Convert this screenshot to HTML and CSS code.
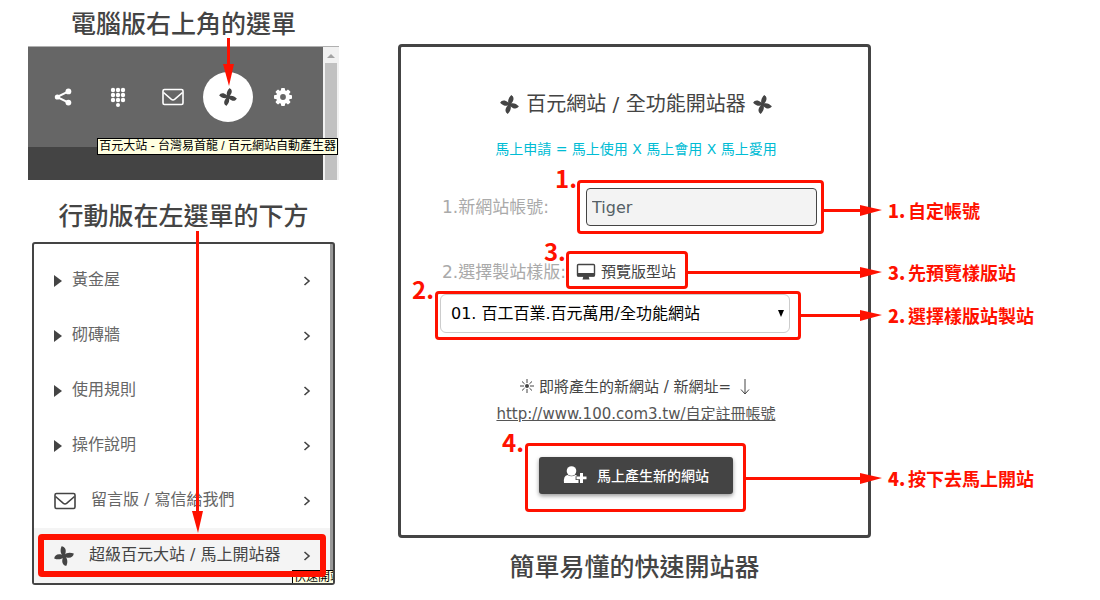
FILE: index.html
```html
<!DOCTYPE html>
<html lang="zh-Hant">
<head>
    <meta charset="utf-8">
    <title>快速開站器</title>
    <link rel="stylesheet" href="styles.css">
</head>
<body>

<!-- Shared icons -->
<svg class="icon-defs" aria-hidden="true">
    <symbol id="fan" viewBox="0 0 20 20">
        <g id="blades">
            <path id="blade" d="M11 11 L8.8 9.6 C6.4 7.6 6 3.6 7.6 0.2 C10.8 0.6 12.6 3.4 11.4 7.6 Z"/>
            <use href="#blade" transform="rotate(90 10 10)"/>
            <use href="#blade" transform="rotate(180 10 10)"/>
            <use href="#blade" transform="rotate(270 10 10)"/>
        </g>
    </symbol>
    <symbol id="mail" viewBox="0 0 22 18">
        <rect x="1" y="1.5" width="20" height="15" rx="1.5" fill="none" stroke="currentColor" stroke-width="1.6"/>
        <path d="M1.5 4.5 L9.4 11.4 Q11 12.6 12.6 11.4 L20.5 4.5" fill="none" stroke="currentColor" stroke-width="1.6"/>
    </symbol>
    <symbol id="chevron" viewBox="0 0 8 10">
        <path d="M1.5 1 L6 5 L1.5 9" fill="none" stroke="currentColor" stroke-width="1.6"/>
    </symbol>
</svg>

<main class="guide">

    <!-- Left: where to find the menu -->
    <section class="menus">
        <h2 class="caption">電腦版右上角的選單</h2>

        <div class="desktop">
            <div class="desktop-page">
                <nav class="toolbar">
                    <button class="tool" aria-label="分享">
                        <svg width="18" height="18" viewBox="0 0 18 18"><path d="M15 3.2 L3 9 L15 14.8" fill="none" stroke="currentColor" stroke-width="2"/><circle cx="14.4" cy="3.4" r="2.9"/><circle cx="3.4" cy="9" r="2.6"/><circle cx="14.4" cy="14.6" r="2.9"/></svg>
                    </button>
                    <button class="tool" aria-label="電話">
                        <svg width="16" height="20" viewBox="0 0 16 20"><g id="keys"><circle cx="3" cy="3" r="2.2"/><circle cx="8" cy="3" r="2.2"/><circle cx="13" cy="3" r="2.2"/></g><use href="#keys" y="5"/><use href="#keys" y="10"/><circle cx="8" cy="18" r="2"/></svg>
                    </button>
                    <button class="tool" aria-label="寫信">
                        <svg width="22" height="18"><use href="#mail"/></svg>
                    </button>
                    <button class="tool tool-active" aria-label="百元大站">
                        <svg class="fan-tilt" width="18" height="18"><use href="#fan"/></svg>
                        <span class="arrow-down"></span>
                    </button>
                    <button class="tool" aria-label="設定">
                        <svg width="18" height="18" viewBox="0 0 18 18"><circle cx="9" cy="9" r="4.9" fill="none" stroke="currentColor" stroke-width="4"/><g id="teeth"><rect x="7" y="0" width="4" height="4" rx="1"/><rect x="7" y="14" width="4" height="4" rx="1"/><rect x="0" y="7" width="4" height="4" rx="1"/><rect x="14" y="7" width="4" height="4" rx="1"/></g><use href="#teeth" transform="rotate(45 9 9)"/></svg>
                    </button>
                </nav>
            </div>
            <div class="scrollbar"></div>
            <span class="tooltip toolbar-tip">百元大站 - 台灣易首龍 / 百元網站自動產生器</span>
        </div>

        <h2 class="caption caption-mobile">行動版在左選單的下方</h2>

        <nav class="side-menu">
            <a class="item" href="#"><span class="caret"></span><span class="item-text">黃金屋</span><svg class="more" width="8" height="10"><use href="#chevron"/></svg></a>
            <a class="item" href="#"><span class="caret"></span><span class="item-text">砌磚牆</span><svg class="more" width="8" height="10"><use href="#chevron"/></svg></a>
            <a class="item" href="#"><span class="caret"></span><span class="item-text">使用規則</span><svg class="more" width="8" height="10"><use href="#chevron"/></svg></a>
            <a class="item" href="#"><span class="caret"></span><span class="item-text">操作說明</span><svg class="more" width="8" height="10"><use href="#chevron"/></svg></a>
            <a class="item item-mail" href="#"><svg width="22" height="18"><use href="#mail"/></svg><span class="item-text">留言版 / 寫信給我們</span><svg class="more" width="8" height="10"><use href="#chevron"/></svg></a>
            <a class="item item-current" href="#"><svg width="20" height="20"><use href="#fan"/></svg><span class="item-text">超級百元大站 / 馬上開站器</span><svg class="more" width="8" height="10"><use href="#chevron"/></svg>
                <span class="tooltip menu-tip">快速開站</span>
                <span class="frame frame-menu"></span>
            </a>
            <span class="arrow-down arrow-menu"></span>
        </nav>
    </section>

    <!-- Right: the site builder form -->
    <section class="builder">
        <form class="panel">
            <h1 class="title">
                <svg class="fan-tilt" width="19" height="19"><use href="#fan"/></svg>
                <span>百元網站 / 全功能開站器</span>
                <svg class="fan-tilt" width="19" height="19"><use href="#fan"/></svg>
            </h1>
            <p class="slogan">馬上申請 = 馬上使用 X 馬上會用 X 馬上愛用</p>

            <div class="row row-account">
                <label for="account">1.新網站帳號:</label>
                <div class="marked account">
                    <input type="text" id="account" name="account" value="Tiger">
                    <span class="frame frame-account"></span>
                    <b class="number number-account">1.</b>
                    <span class="callout callout-account"><i class="arrow"></i><b>1.</b>自定帳號</span>
                </div>
            </div>

            <div class="row row-template">
                <label for="template">2.選擇製站樣版:</label>
                <div class="marked preview">
                    <a class="preview-link" href="#"><svg width="20" height="18" viewBox="0 0 20 18"><rect x="1.5" y="1.5" width="17" height="11.5" rx="1" fill="none" stroke="currentColor" stroke-width="1.4"/><path d="M1 10 H19 V12.5 Q19 13.5 18 13.5 H2 Q1 13.5 1 12.5 Z M7.5 13 H12.5 L13.5 16.5 H6.5 Z"/></svg>預覽版型站</a>
                    <span class="frame frame-preview"></span>
                    <b class="number number-preview">3.</b>
                    <span class="callout callout-preview"><i class="arrow"></i><b>3.</b>先預覽樣版站</span>
                </div>
            </div>

            <div class="marked template">
                <select id="template" name="template">
                    <option>01. 百工百業.百元萬用/全功能網站</option>
                </select>
                <span class="frame frame-template"></span>
                <b class="number number-template">2.</b>
                <span class="callout callout-template"><i class="arrow"></i><b>2.</b>選擇樣版站製站</span>
            </div>

            <p class="result">
                <svg width="14" height="14" viewBox="0 0 14 14"><circle cx="7" cy="7" r="2"/><path d="M7 0 V4 M7 10 V14 M0 7 H4 M10 7 H14 M2 2.5 L4.6 4.9 M9.4 9.1 L12 11.5 M12 2.5 L9.4 4.9 M4.6 9.1 L2 11.5" stroke="currentColor" stroke-width="1"/></svg>
                即將產生的新網站 / 新網址= <svg class="down" width="16" height="16" viewBox="0 0 16 16"><path d="M9 0 V15 M5 10.5 L9 15 L13 10.5" fill="none" stroke="currentColor"/></svg><br>
                <a href="#">http://www.100.com3.tw/自定註冊帳號</a>
            </p>

            <div class="marked submit">
                <button type="button" class="submit-button">
                    <svg width="24" height="18" viewBox="0 0 24 18"><circle cx="8.5" cy="5" r="4.8"/><path d="M1 17 Q0.2 9.5 4.6 9 Q8.5 11.5 12.4 9 Q13.5 9.2 14 10 V10.2 H12.6 V14 H15.5 V17 Z"/><path d="M17 7 H20 V10.5 H23.5 V13.2 H20 V17 H17 V13.2 H13.5 V10.5 H17 Z"/></svg>
                    馬上產生新的網站
                </button>
                <span class="frame frame-submit"></span>
                <b class="number number-submit">4.</b>
                <span class="callout callout-submit"><i class="arrow"></i><b>4.</b>按下去馬上開站</span>
            </div>
        </form>

        <h2 class="caption caption-builder">簡單易懂的快速開站器</h2>
    </section>

</main>

</body>
</html>
```
FILE: styles.css
```css
* {
    box-sizing: border-box;
}

body {
    margin: 0;
    background-color: #fff;
    color: #444;
    font-family: "DejaVu Sans", "Noto Sans CJK TC", sans-serif;
    font-size: 16px;
}

h1, h2, p {
    margin: 0;
}

svg {
    fill: currentColor;
    flex: none;
}

.icon-defs {
    position: absolute;
    width: 0;
    height: 0;
}

/* right padding leaves room for the callouts */
.guide {
    display: grid;
    grid-template-columns: 311fr 473fr;
    column-gap: 59px;
    padding: 5px 229px 0 28px;
}

.caption {
    font-family: "Noto Sans CJK TC", sans-serif;
    font-size: 25px;
    font-weight: 500;
    line-height: 34px;
    text-align: center;
    white-space: nowrap;
}

.caption-mobile {
    margin: 17px 0 11px;
}

.caption-builder {
    margin-top: 10px;
}

/* Desktop toolbar */
.desktop {
    position: relative;
    display: flex;
    margin-top: 7px;
    border-top: 1px solid #b0b0b0;
}

.desktop-page {
    flex: 1;
    padding-bottom: 33px;
    background-color: #444;
}

.toolbar {
    display: flex;
    gap: 5px;
    padding: 25px 10px;
    background-color: #666;
}

.tool {
    position: relative;
    display: flex;
    align-items: center;
    justify-content: center;
    width: 50px;
    height: 50px;
    padding: 0;
    border: none;
    border-radius: 50%;
    background: none;
    color: #fff;
    cursor: pointer;
}

.tool-active {
    background-color: #fff;
    color: #444;
}

.fan-tilt {
    transform: rotate(25deg);
}

.scrollbar {
    position: relative;
    width: 16px;
    padding: 16px 2px 0;
    background-color: #f1f1f1;
}

.scrollbar::before {
    content: "";
    position: absolute;
    top: 7px;
    left: 4px;
    border: 4px solid transparent;
    border-top: none;
    border-bottom-color: #a3a3a3;
}

.scrollbar::after {
    content: "";
    display: block;
    height: 100%;
    background-color: #c1c1c1;
}

.tooltip {
    position: absolute;
    border: 1px solid #000;
    background-color: #ffffe1;
    color: #000;
    font-family: "Liberation Sans", "Noto Sans CJK TC", sans-serif;
    font-size: 12px;
    line-height: 15px;
    white-space: nowrap;
}

.toolbar-tip {
    top: 91px;
    right: 1px;
    padding: 0 1px;
}

/* Mobile side menu */
.side-menu {
    position: relative;
    margin: 0 4px;
    padding-top: 9px;
    border: 2px solid #444;
    border-radius: 3px;
    background: linear-gradient(#999, #999) right / 3px 100% no-repeat;
}

.item {
    position: relative;
    display: flex;
    align-items: center;
    height: 55px;
    margin-right: 3px;
    padding: 0 19px 0 20px;
    color: #666;
    line-height: 24px;
    text-decoration: none;
    white-space: nowrap;
}

.item svg {
    color: #444;
}

.item-text {
    flex: 1;
    margin-left: 10px;
    padding-bottom: 2px;
}

.item-mail .item-text,
.item-current .item-text {
    margin-left: 15px;
}

.item-current {
    background-color: #f4f4f4;
    color: #444;
}

.caret {
    border: 6px solid transparent;
    border-left: 8px solid #444;
    border-right: none;
}

.menu-tip {
    right: -3px;
    bottom: 0;
    width: 41px;
    height: 13px;
    border-width: 1px 0 0 1px;
    padding-left: 1px;
    line-height: 12px;
    overflow: hidden;
}

/* Red marks */
.frame {
    position: absolute;
    border: 3px solid #ff1100;
    border-radius: 4px;
    pointer-events: none;
}

.frame-menu {
    inset: 6px 4px 6px 4px;
    border-width: 6px;
}

.arrow-down {
    position: absolute;
    bottom: 36px;
    left: 50%;
    width: 3px;
    height: 48px;
    margin-left: -1px;
    background: linear-gradient(#ff1100, #ff1100) top / 3px calc(100% - 20px) no-repeat;
}

.arrow-down::after {
    content: "";
    position: absolute;
    bottom: 0;
    left: -4px;
    border: solid transparent;
    border-width: 22px 5px 0 6px;
    border-top-color: #ff1100;
}

.arrow-menu {
    top: -13px;
    bottom: 50px;
    left: 162px;
    height: auto;
    margin-left: 0;
}

.marked {
    position: relative;
}

.number,
.callout {
    position: absolute;
    color: #ff1100;
    font-family: "Noto Sans CJK TC", sans-serif;
    font-weight: 700;
    line-height: 24px;
    white-space: nowrap;
}

.number {
    font-size: 24px;
}

.callout {
    display: flex;
    align-items: center;
    left: 100%;
    font-size: 18px;
}

.callout b {
    width: 20px;
    margin-left: 6px;
}

.arrow {
    position: relative;
    height: 3px;
    background: linear-gradient(#ff1100, #ff1100) left / calc(100% - 20px) 3px no-repeat;
}

.arrow::after {
    content: "";
    position: absolute;
    top: -4px;
    right: 0;
    border: solid transparent;
    border-width: 5px 0 6px 22px;
    border-left-color: #ff1100;
}

/* Builder form */
.panel {
    margin-top: 39px;
    padding: 42px 36px 41px 39px;
    border: 3px solid #444;
    border-radius: 4px;
}

.title {
    display: flex;
    align-items: center;
    justify-content: center;
    gap: 7px;
    font-size: 20px;
    font-weight: 400;
    line-height: 30px;
    white-space: nowrap;
}

.slogan {
    margin-top: 20px;
    color: #00bcd4;
    font-size: 14px;
    line-height: 20px;
    text-align: center;
}

.row {
    display: flex;
    align-items: center;
    padding-left: 2px;
}

.row label {
    color: #aaa;
    font-size: 17px;
    line-height: 20px;
    white-space: nowrap;
}

.row-account {
    justify-content: space-between;
    margin-top: 29px;
    padding-right: 15px;
}

.account {
    width: 231px;
}

.account input {
    display: block;
    width: 100%;
    height: 38px;
    padding: 0 5px;
    border: 1px solid #444;
    border-radius: 4px;
    background-color: #f3f3f3;
    color: #555f66;
    font: inherit;
}

.frame-account {
    inset: -8px -7px -8px -9px;
}

.number-account {
    top: -22px;
    left: -31px;
}

.callout-account {
    top: 10px;
    margin-left: 7px;
}

.callout-account .arrow {
    width: 58px;
}

.row-template {
    margin-top: 36px;
}

.preview {
    margin-left: 10px;
}

.preview-link {
    display: flex;
    align-items: center;
    gap: 5px;
    color: #444;
    font-size: 15px;
    line-height: 20px;
    text-decoration: none;
    white-space: nowrap;
}

.frame-preview {
    inset: -11px -12px -7px -10px;
}

.number-preview {
    top: -23px;
    left: -32px;
}

.callout-preview {
    top: -2px;
    margin-left: 12px;
}

.callout-preview .arrow {
    width: 194px;
}

.template {
    width: 350px;
    margin-top: 12px;
}

.template select {
    appearance: none;
    display: block;
    width: 100%;
    height: 39px;
    padding: 0 10px;
    border: 1px solid #ccc;
    border-radius: 6px;
    background-color: #fff;
    color: #000;
    font: inherit;
}

.template::after {
    content: "";
    position: absolute;
    top: 16px;
    right: 6px;
    border: solid transparent;
    border-width: 7px 3px 0;
    border-top-color: #000;
}

.frame-template {
    inset: -3px -11px -7px -5px;
}

.number-template {
    top: -17px;
    left: -28px;
}

.callout-template {
    top: 9px;
    margin-left: 11px;
}

.callout-template .arrow {
    width: 81px;
}

.result {
    margin-top: 41px;
    font-size: 15px;
    line-height: 27px;
    text-align: center;
    white-space: nowrap;
}

.result svg {
    vertical-align: -1px;
}

.result .down {
    vertical-align: -3px;
}

.result a {
    color: #555;
}

.submit {
    width: 194px;
    margin: 29px auto 0;
}

.submit-button {
    display: flex;
    align-items: center;
    justify-content: center;
    gap: 10px;
    width: 100%;
    height: 37px;
    padding: 0 0 2px;
    border: none;
    border-radius: 3px;
    background-color: #444;
    box-shadow: 0 2px 4px rgba(0, 0, 0, 0.4);
    color: #fff;
    font: inherit;
    font-size: 14px;
    font-weight: 500;
    cursor: pointer;
}

.frame-submit {
    inset: -14px -13px -18px -14px;
}

.number-submit {
    top: -27px;
    left: -37px;
}

.callout-submit {
    top: 9px;
    margin-left: 13px;
}

.callout-submit .arrow {
    width: 136px;
}
```
